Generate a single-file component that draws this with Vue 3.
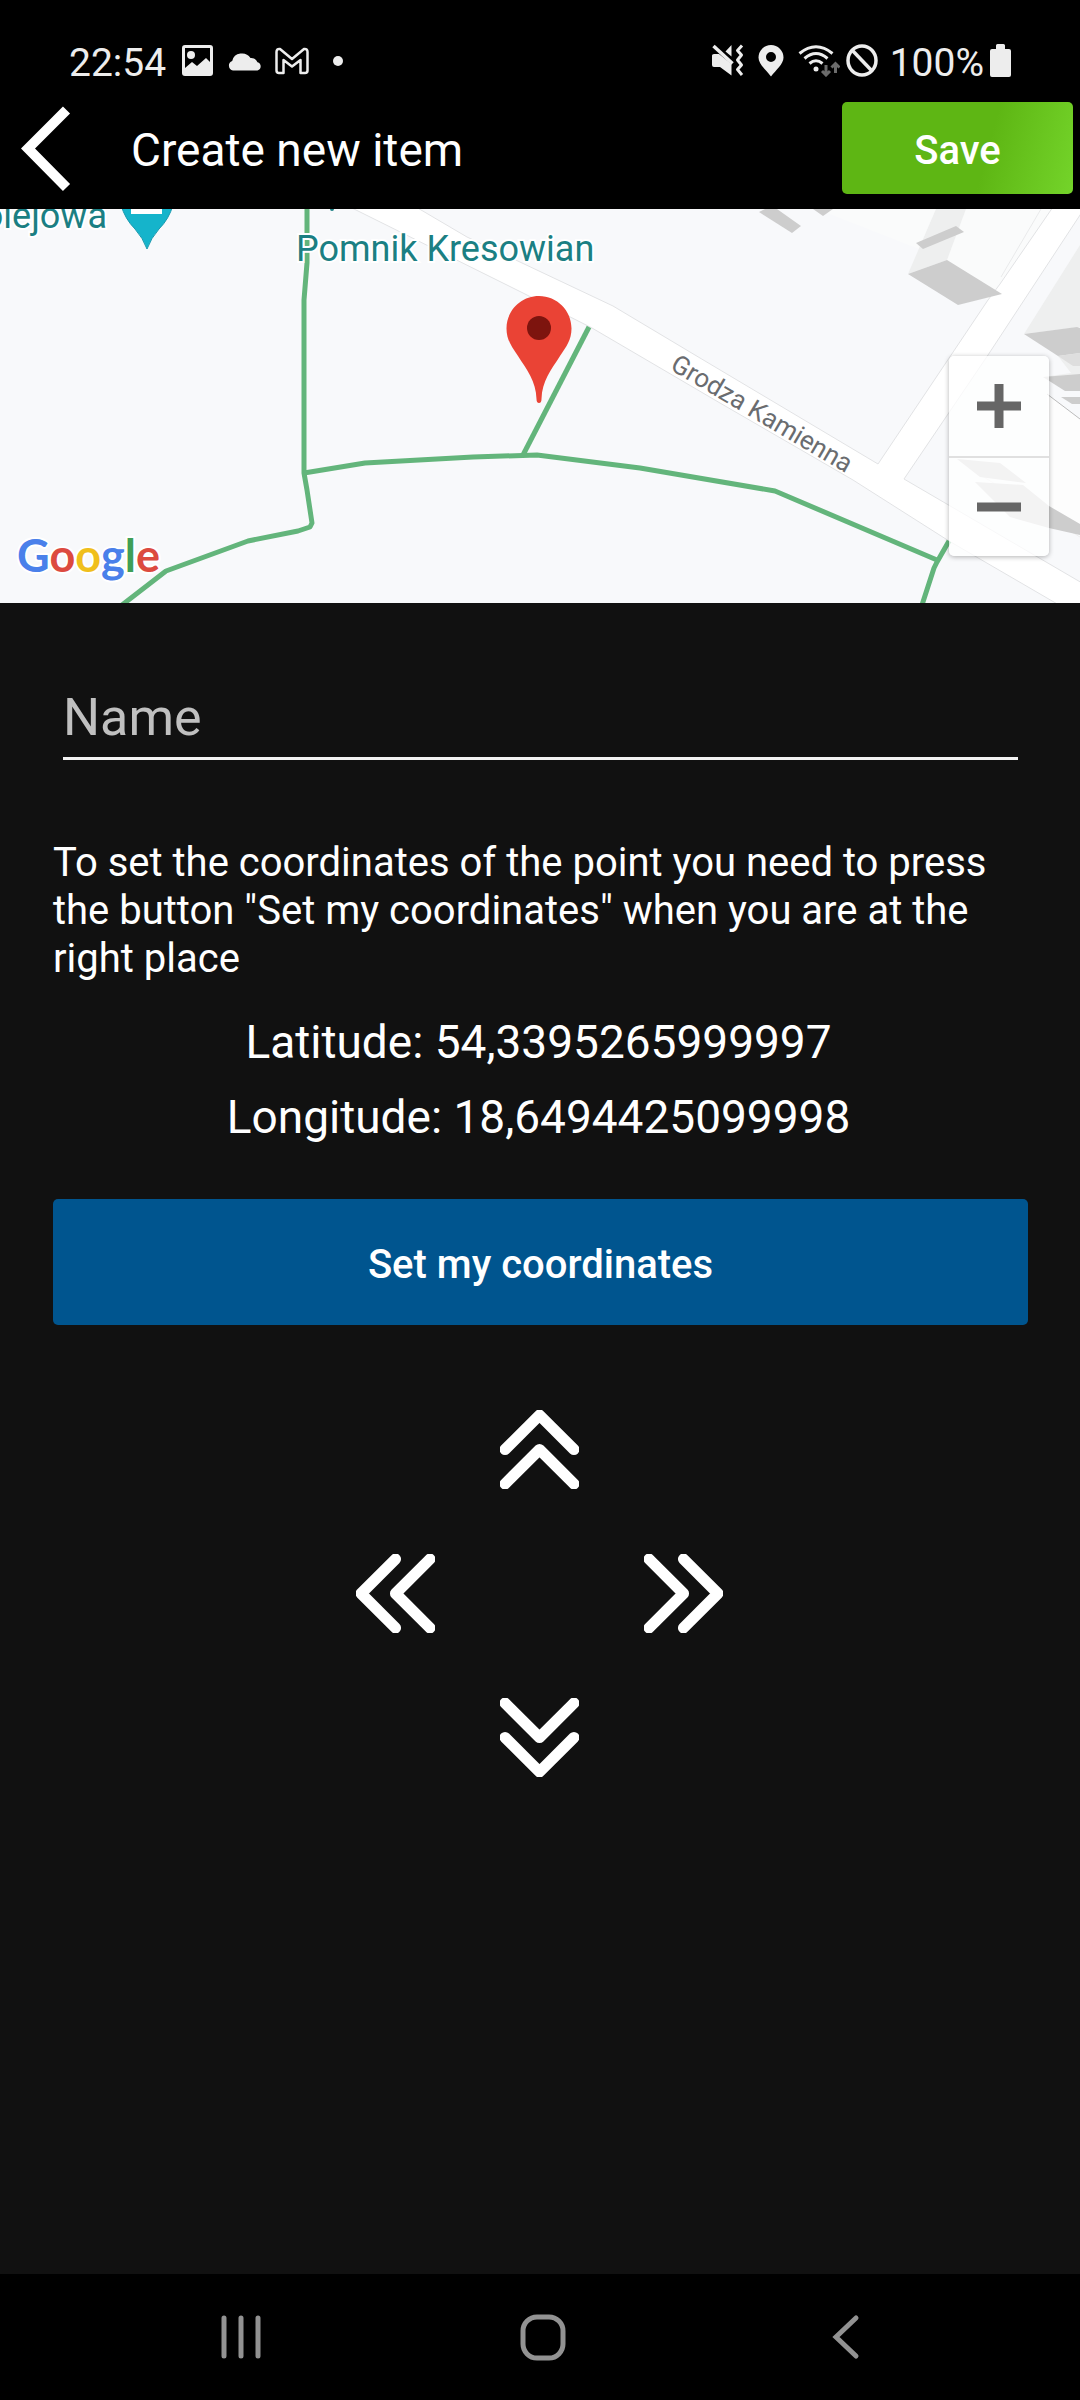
<script setup>
import { ref } from 'vue'

const name = ref('')
const latitude = ref('54,3395265999997')
const longitude = ref('18,6494425099998')
const directions = ['up', 'left', 'right', 'down']
const chevrons = {
  up: ['M5 39 39 5 73 39', 'M5 73 39 39 73 73'],
  down: ['M5 5 39 39 73 5', 'M5 39 39 73 73 39'],
  left: ['M39 5 5 39 39 73', 'M73 5 39 39 73 73'],
  right: ['M5 5 39 39 5 73', 'M39 5 73 39 39 73'],
}
</script>

<template>
  <div class="screen">
    <div class="status">
      <div class="status-group">
        <span class="status-text">22:54</span>
        <svg class="ic-photo" width="31" height="31" viewBox="0 0 31 31">
          <path fill="#ededed" fill-rule="evenodd" d="M3 0h25a3 3 0 0 1 3 3v25a3 3 0 0 1-3 3H3a3 3 0 0 1-3-3V3a3 3 0 0 1 3-3zM3 3v20l7-6 5 4 9-8 4 4V3z" />
          <circle cx="9" cy="10" r="4" fill="#ededed" />
        </svg>
        <svg class="ic-cloud" width="34" height="20" viewBox="0 0 34 20">
          <path fill="#ededed" d="M5 19.500a5 5 0 0 1-.8-9.600A10 9.500 0 0 1 22.500 7 7 7 0 0 1 29.500 11.200 4.300 4.300 0 0 1 29.500 19.500z" />
        </svg>
        <svg class="ic-mail" width="34" height="28" viewBox="0 0 34 28">
          <path fill="none" stroke="#ededed" stroke-width="2.500" stroke-linejoin="round" d="M1.500 5Q1.500 1.500 5 2L17 12 29 2q3.500-.5 3.500 3v18.500q0 2.500-2.500 2.500h-4.500V13L17 19.500 8.500 13v13H4q-2.500 0-2.500-2.500z" />
        </svg>
        <span class="dot"></span>
      </div>
      <div class="status-group">
        <svg class="ic-mute" width="32" height="33" viewBox="0 0 32 33">
          <path fill="#ededed" d="M0 11.500Q0 10 2 10h5l12.500 10v11.500L8 23H2q-2 0-2-2zM13.500 7.500 19.500 1v11.500z" />
          <path d="m1.500 2 19 17.500" stroke="#ededed" stroke-width="3.500" />
          <path fill="none" stroke="#ededed" stroke-width="3" stroke-linejoin="round" d="m30 1.500-4.500 5 4 4.500-4 5 4 5-4 4.500 4.500 5.500" />
        </svg>
        <svg class="ic-place" width="26" height="33" viewBox="0 0 26 33">
          <path fill="#ededed" fill-rule="evenodd" d="M13 1a12.500 12.500 0 0 1 12.500 12.500C25.500 20 18 26 13 32.500 8 26 .5 20 .5 13.500A12.500 12.500 0 0 1 13 1zm0 7a5 5 0 1 0 0 10 5 5 0 0 0 0-10z" />
        </svg>
        <svg class="ic-wifi" width="42" height="33" viewBox="0 0 42 33">
          <g fill="none" stroke="#ededed" stroke-width="3">
            <path d="M1.500 9.500Q18 -4 34.500 9.500" />
            <path d="M6.500 14.500q11.500-10 23 0" />
            <path d="M11.500 19.500q6.500-5.500 13 0" />
          </g>
          <circle cx="18" cy="25" r="2.500" fill="#ededed" />
          <path fill="none" stroke="#6c6c6c" stroke-width="3" d="M28 21v10m-4-4 4 4 4-4M37.500 29V19.500m-4 4 4-4 4 4" />
        </svg>
        <svg class="ic-block" width="32" height="33" viewBox="0 0 32 33">
          <ellipse cx="16" cy="16.500" rx="14" ry="14.500" fill="none" stroke="#ededed" stroke-width="3.500" />
          <path d="m6 6 20 21" stroke="#ededed" stroke-width="3.500" />
        </svg>
        <span class="status-text percent">100%</span>
        <svg class="ic-battery" width="21" height="33" viewBox="0 0 21 33">
          <path fill="#ededed" d="M6 1.500Q6 0 7.500 0h6Q15 0 15 1.500V5h4q2 0 2 2v24q0 2-2 2H2q-2 0-2-2V7q0-2 2-2h4z" />
        </svg>
      </div>
    </div>

    <header class="header">
      <button class="back" type="button" aria-label="Back">
        <svg width="50" height="86" viewBox="0 0 50 86">
          <path d="M45.500 4 7 42.500 45.500 81.500" fill="none" stroke="#fff" stroke-width="10" />
        </svg>
      </button>
      <h1>Create new item</h1>
      <button class="save" type="button">Save</button>
    </header>

    <section class="map">
      <svg class="map-canvas" viewBox="0 0 1080 394" preserveAspectRatio="xMidYMid slice">
        <rect width="1080" height="394" fill="#f8f9fb" />
        <path fill="#fafbfb" d="M817 0h236L988 91 947 51z" />
        <g fill="#fff" stroke="#e2e3e5" stroke-width="1">
          <path d="M352 -1 525 85 592 119 720 194 853 271 949 332 1059 396H1082V374L904 270 988 146 1082 3V-2H1053L1000 75 988 91 878 255 700 149 613 97 467 28 416 -2z" />
        </g>
        <path d="M1041 0 1001 68" stroke="#e9eaeb" stroke-width="1" />
        <path d="M979 265 1080 328" stroke="#eee" stroke-width="1" />

        <g fill="#eeefef">
          <path d="M936 0h30L947 51 908 65z" />
          <path d="M1080 36 1024 125 1080 118z" />
          <path d="M1058 147 1080 140v28l-37 0 28-4z" />
        </g>
        <path d="M1047 185 1080 210V315L1049 297z" fill="#fdfdfd" />
        <g fill="#cdcdcd">
          <path d="M759 3 765 0H777L801 17 792 24z" />
          <path d="M813 0H833L823 7z" />
          <path d="M916 34 956 17 964 23 923 40z" />
          <path d="M908 65 947 51 1002 85 958 96z" />
          <path d="M1024 125 1077 118 1080 119V144L1058 147z" />
          <path d="M1043 168 1080 165V182H1065z" />
          <path d="M1061 188H1080V195H1072z" />
          <path d="M957 250 1000 254 1026 274 980 268z" />
          <path d="M975 273 1023 276 1049 297 1080 315V326L1049 319 1010 308z" />
        </g>
        <path d="M1058 147 1080 144V157H1073z" fill="#dedede" />
        <path d="M1047 185 1080 210" stroke="#bbb" stroke-width="1" />

        <g fill="none" stroke="#63b57b" stroke-width="5" stroke-linejoin="round">
          <path d="M307 0V54L304 91V264L307 281 312 314 310 318 298 322 248 332 166 362 122 396" />
          <path d="M304 264 365 254 473 248 537 246 640 259 775 282 937 351" />
          <path d="M589 118 523 246" />
          <path d="M949 332 937 353 934 359 922 396" />
        </g>

        <path d="M121 -4 Q125 10 135 20 Q143 29 147 40 Q151 29 159 20 Q169 10 173 -4z" fill="#15b4cb" stroke="#1a9aae" stroke-width="1" />
        <path d="M131 0h31v5h-31z" fill="#fff" />
        <circle cx="332" cy="0" r="2" fill="#1b7f83" />

        <text class="place" x="296" y="52">Pomnik Kresowian</text>
        <text class="place" x="107" y="19" text-anchor="end">Kolejowa</text>
        <text class="street" transform="translate(669 160) rotate(30.500)">Grodza Kamienna</text>

        <path fill="#ea4335" d="M539 87C521 87 506.500 101.500 506.500 119.500C506.500 131 512 138 518 147C527 161 536 172 536.500 190Q536.500 194 539 194T541.500 190C542 172 551 161 560 147C566 138 571.500 131 571.500 119.500C571.500 101.500 557 87 539 87z" />
        <circle cx="539" cy="119" r="12" fill="#7d140e" />

        <text class="brand" x="17" y="363"><tspan fill="#4a80ea">G</tspan><tspan fill="#dc4a3f">o</tspan><tspan fill="#f0bf1c">o</tspan><tspan fill="#4a80ea">g</tspan><tspan fill="#3f9f57">l</tspan><tspan fill="#dc4a3f">e</tspan></text>
      </svg>

      <div class="zoom">
        <button type="button" aria-label="Zoom in">
          <svg width="44" height="44" viewBox="0 0 44 44"><path d="M0 22h44M22 0v44" stroke="#666" stroke-width="9" /></svg>
        </button>
        <button type="button" aria-label="Zoom out">
          <svg width="44" height="44" viewBox="0 0 44 44"><path d="M0 22h44" stroke="#666" stroke-width="9" /></svg>
        </button>
      </div>
    </section>

    <main class="form">
      <input v-model="name" class="name" type="text" placeholder="Name" aria-label="Name" />
      <p class="hint">To set the coordinates of the point you need to press the button "Set my coordinates" when you are at the right place</p>
      <div class="coords">
        <div>Latitude: {{ latitude }}</div>
        <div>Longitude: {{ longitude }}</div>
      </div>
      <button class="set" type="button">Set my coordinates</button>
      <div class="pad">
        <button v-for="d in directions" :key="d" type="button" :class="d" :aria-label="'Move ' + d">
          <svg width="79" height="79" viewBox="0 0 78 78">
            <path v-for="p in chevrons[d]" :key="p" :d="p" fill="none" stroke="#fff" stroke-width="11" stroke-linecap="round" stroke-linejoin="round" />
          </svg>
        </button>
      </div>
    </main>

    <nav class="nav">
      <button type="button" aria-label="Recent apps">
        <svg width="48" height="48" viewBox="0 0 48 48"><path d="M7 5v38M24 5v38M41 5v38" stroke="#929292" stroke-width="5" stroke-linecap="round" /></svg>
      </button>
      <button type="button" aria-label="Home">
        <svg width="48" height="48" viewBox="0 0 48 48"><rect x="4" y="4" width="40" height="41" rx="14" fill="none" stroke="#929292" stroke-width="5" /></svg>
      </button>
      <button type="button" aria-label="Back">
        <svg width="48" height="48" viewBox="0 0 48 48"><path d="M34 5 14 24 34 43" fill="none" stroke="#929292" stroke-width="5" stroke-linecap="round" /></svg>
      </button>
    </nav>
  </div>
</template>

<style>
body {
  margin: 0;
  background: #000;
}
</style>

<style scoped>
.screen {
  display: flex;
  flex-direction: column;
  min-height: 100vh;
  background: #111;
  color: #fff;
  font-family: Roboto, "Liberation Sans", sans-serif;
}
svg {
  display: block;
  flex: none;
}
button {
  margin: 0;
  padding: 0;
  border: 0;
  background: none;
  color: inherit;
  font-family: inherit;
}

.status {
  display: flex;
  justify-content: space-between;
  box-sizing: border-box;
  height: 100px;
  padding: 21px 69px 0;
  background: #000;
  color: #ededed;
}
.status-group {
  display: flex;
  align-items: center;
  height: 79px;
}
.status-text {
  padding-top: 4px;
  font-size: 39px;
  line-height: 40px;
}
.ic-photo {
  margin-left: 16px;
}
.ic-cloud {
  margin-left: 15px;
}
.ic-mail {
  margin-left: 13px;
}
.dot {
  width: 10px;
  height: 10px;
  margin-left: 24px;
  border-radius: 50%;
  background: #ededed;
}
.ic-place {
  margin-left: 14px;
}
.ic-wifi {
  margin-left: 14px;
}
.ic-block {
  margin-left: 6px;
}
.percent {
  margin-left: 12px;
}
.ic-battery {
  margin-left: 6px;
}

.header {
  display: flex;
  align-items: center;
  height: 92px;
  padding: 2px 7px 15px 21px;
  background: #000;
}
.back {
  height: 92px;
}
.back svg {
  margin-top: 2px;
}
h1 {
  flex: 1;
  margin: 0;
  padding: 3px 0 0 60px;
  font-size: 46px;
  font-weight: 400;
  line-height: 54px;
}
.save {
  width: 231px;
  height: 92px;
  padding-top: 4px;
  border-radius: 5px;
  background: linear-gradient(105deg, #5eb614 0%, #5eb614 62%, #74d42a 100%);
  font-size: 40px;
  font-weight: 500;
}

.map {
  position: relative;
  height: 394px;
  overflow: hidden;
}
.map-canvas {
  width: 100%;
  height: 100%;
}
.place {
  fill: #1b7f83;
  stroke: #fff;
  stroke-width: 4px;
  paint-order: stroke;
  font-size: 36px;
}
.street {
  fill: #6a6c6f;
  font-size: 26px;
}
.brand {
  stroke: #fff;
  stroke-width: 4px;
  paint-order: stroke;
  font-family: Lato, "Liberation Sans", sans-serif;
  font-size: 45px;
  font-weight: 700;
}
.zoom {
  position: absolute;
  top: 147px;
  right: 31px;
  width: 100px;
  border-radius: 5px;
  background: rgba(255, 255, 255, 0.75);
  box-shadow: 0 1px 5px rgba(0, 0, 0, 0.3);
}
.zoom button {
  display: flex;
  align-items: center;
  justify-content: center;
  width: 100%;
  height: 100px;
}
.zoom button + button {
  box-sizing: border-box;
  border-top: 2px solid #e0e0e0;
}

.form {
  display: flex;
  flex: 1;
  flex-direction: column;
  padding: 85px 52px 0 53px;
}
.name {
  height: 60px;
  margin: 0 10px;
  padding: 0 0 9px;
  border: 0;
  border-bottom: 3px solid #f2f2f2;
  outline: 0;
  background: none;
  color: #fff;
  font-family: inherit;
  font-size: 52px;
  line-height: 60px;
}
.name::placeholder {
  color: #c0c0c0;
  opacity: 1;
}
.hint {
  margin: 79px 0 22px;
  font-size: 40px;
  line-height: 48px;
}
.coords {
  padding-right: 4px;
  font-size: 46px;
  line-height: 75px;
  text-align: center;
}
.set {
  height: 126px;
  margin-top: 44px;
  padding-top: 4px;
  border-radius: 5px;
  background: #00558f;
  font-size: 40px;
  font-weight: 500;
}
.pad {
  display: grid;
  grid-template: repeat(3, 144px) / repeat(3, 144px);
  justify-content: center;
  margin-top: 52px;
  padding-right: 2px;
}
.pad button {
  display: flex;
  align-items: center;
  justify-content: center;
}
.up {
  grid-area: 1 / 2;
}
.left {
  grid-area: 2 / 1;
}
.right {
  grid-area: 2 / 3;
}
.down {
  grid-area: 3 / 2;
}

.nav {
  display: flex;
  height: 126px;
  padding: 0 83px 0 90px;
  background: #000;
}
.nav button {
  display: flex;
  flex: 1;
  align-items: center;
  justify-content: center;
}
</style>
